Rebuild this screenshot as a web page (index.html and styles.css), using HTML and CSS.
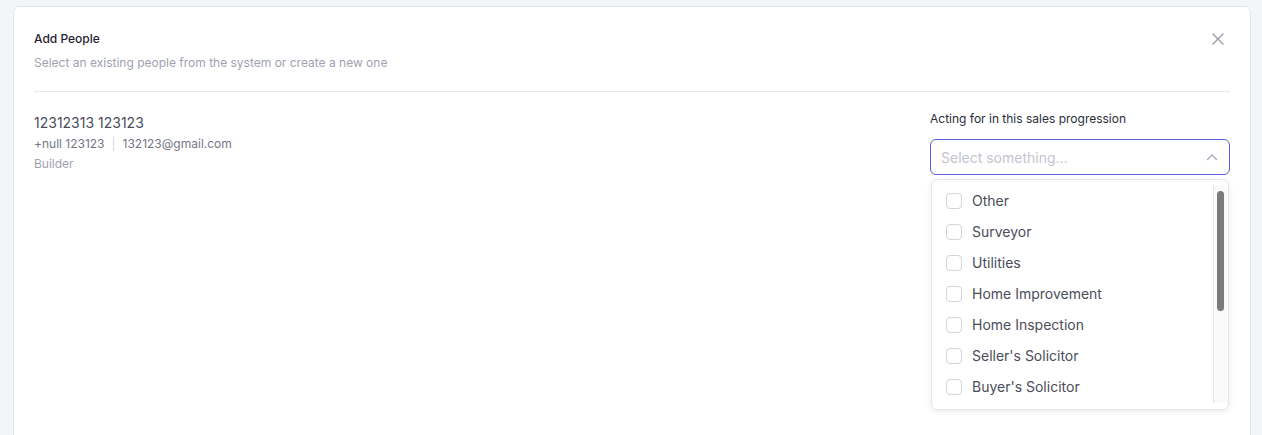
FILE: index.html
```html
<!DOCTYPE html>
<html lang="en">
<head>
<meta charset="utf-8">
<title>Add People</title>
<link rel="stylesheet" href="styles.css">
</head>
<body>
<div class="card">
  <div class="header">
    <div class="titles">
      <div class="title">Add People</div>
      <div class="subtitle">Select an existing people from the system or create a new one</div>
    </div>
    <button class="close" aria-label="Close">
      <svg width="12" height="12" viewBox="0 0 12 12"><path d="M1 1L11 11M11 1L1 11" stroke="#9a9cab" stroke-width="1.4" stroke-linecap="round" fill="none"/></svg>
    </button>
  </div>
  <div class="body">
    <div class="person">
      <div class="name">12312313 123123</div>
      <div class="contact">+null 123123<span class="sep">|</span>132123@gmail.com</div>
      <div class="role">Builder</div>
    </div>
    <div class="acting">
      <div class="label">Acting for in this sales progression</div>
      <div class="select-wrap">
        <div class="select">
          <span class="placeholder">Select something...</span>
          <svg class="chev" width="12" height="8" viewBox="0 0 12 8"><path d="M1.5 6.5L6 2L10.5 6.5" stroke="#a5a7b4" stroke-width="1.3" fill="none" stroke-linecap="round" stroke-linejoin="round"/></svg>
        </div>
        <div class="dropdown">
          <ul class="options">
            <li class="option"><span class="check"></span>Other</li>
            <li class="option"><span class="check"></span>Surveyor</li>
            <li class="option"><span class="check"></span>Utilities</li>
            <li class="option"><span class="check"></span>Home Improvement</li>
            <li class="option"><span class="check"></span>Home Inspection</li>
            <li class="option"><span class="check"></span>Seller's Solicitor</li>
            <li class="option"><span class="check"></span>Buyer's Solicitor</li>
          </ul>
          <div class="scrollbar"><div class="thumb"></div></div>
        </div>
      </div>
    </div>
  </div>
</div>
</body>
</html>
```

FILE: styles.css
```css
* { box-sizing: border-box; }
html, body { margin: 0; padding: 0; }
body {
  background: #f4f5f9;
  font-family: Inter, "Noto Sans", sans-serif;
  padding: 6px 11px 0 13px;
  overflow: hidden;
}
.card {
  background: #ffffff;
  border: 1px solid #e3e4ea;
  border-radius: 6px;
  padding: 0 20px;
  min-height: 470px;
}
.header {
  display: flex;
  justify-content: space-between;
  align-items: flex-start;
  padding: 23px 0 19px;
  border-bottom: 1px solid #e8e9ee;
}
.title {
  font-size: 12px;
  line-height: 18px;
  font-weight: 500;
  color: #1f2130;
}
.subtitle {
  margin-top: 6px;
  font-size: 12px;
  line-height: 18px;
  color: #a0a2b0;
}
.close {
  border: 0;
  background: none;
  padding: 0;
  margin: 3px 6px 0 0;
  width: 12px;
  height: 12px;
  display: flex;
  cursor: pointer;
}
.body {
  display: flex;
  justify-content: space-between;
  align-items: flex-start;
  padding-top: 18px;
}
.person { margin-top: 3px; }
.name {
  font-size: 14px;
  line-height: 20px;
  color: #4a4d5a;
}
.contact {
  margin-top: 1px;
  font-size: 12px;
  line-height: 20px;
  color: #737685;
}
.sep {
  color: #d6d8de;
  margin: 0 7px;
}
.role {
  font-size: 12px;
  line-height: 20px;
  color: #a0a2b0;
}
.acting { width: 300px; }
.label {
  font-size: 12px;
  line-height: 18px;
  color: #2a2c38;
}
.select-wrap {
  position: relative;
  margin-top: 11px;
}
.select {
  height: 36px;
  border: 1px solid #5d60d8;
  border-radius: 6px;
  padding: 0 11px 0 10px;
  display: flex;
  align-items: center;
  justify-content: space-between;
}
.placeholder {
  font-size: 14px;
  color: #c4c5cf;
}
.chev { margin-top: -1px; }
.dropdown {
  position: absolute;
  top: 40px;
  left: 1px;
  right: 1px;
  background: #ffffff;
  border: 1px solid #e6e7ec;
  border-radius: 6px;
  box-shadow: 0 2px 6px rgba(20, 22, 40, 0.08);
  padding: 5px 0 6px;
  display: flex;
}
.options {
  list-style: none;
  margin: 0;
  padding: 0;
  flex: 1;
  height: 218px;
}
.scrollbar {
  width: 15px;
  height: 218px;
  background: #fafafa;
  border-left: 1px solid #e6e6e6;
  padding: 6px 3px 0 3px;
}
.thumb {
  width: 7px;
  height: 120px;
  border-radius: 4px;
  background: #7a7a7a;
}
.option {
  height: 31px;
  display: flex;
  align-items: center;
  padding-left: 14px;
  font-size: 14px;
  color: #4a4d5a;
}
.check {
  width: 16px;
  height: 16px;
  border: 1px solid #d3d4dd;
  border-radius: 4px;
  margin-right: 10px;
  flex-shrink: 0;
}
```
